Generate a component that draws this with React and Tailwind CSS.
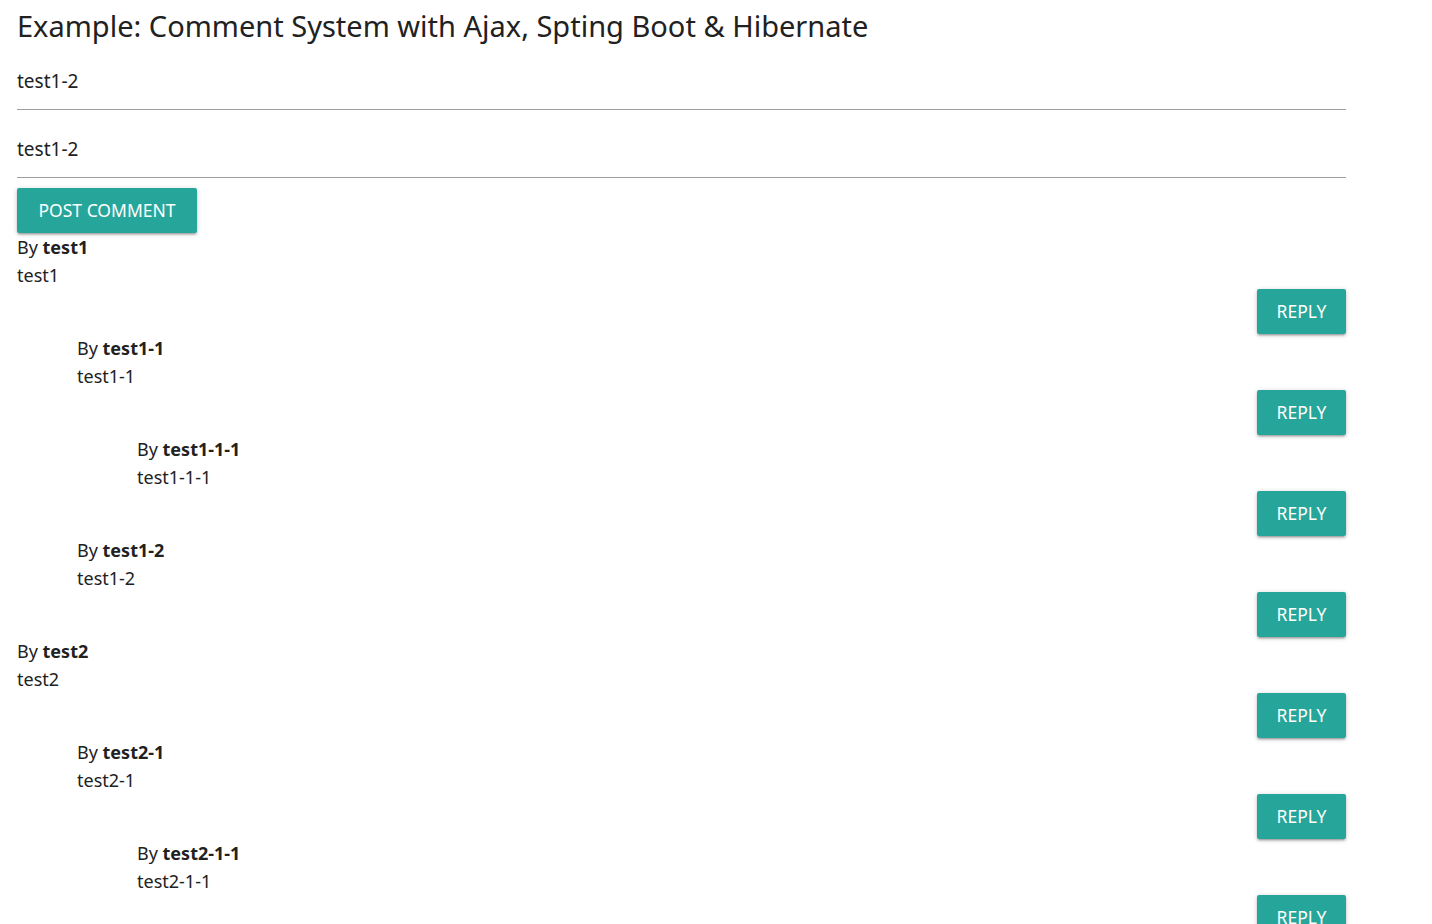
import React from "react";

const comments = [
  { author: "test1", text: "test1", level: 0 },
  { author: "test1-1", text: "test1-1", level: 1 },
  { author: "test1-1-1", text: "test1-1-1", level: 2 },
  { author: "test1-2", text: "test1-2", level: 1 },
  { author: "test2", text: "test2", level: 0 },
  { author: "test2-1", text: "test2-1", level: 1 },
  { author: "test2-1-1", text: "test2-1-1", level: 2 },
];

const indent = ["pl-0", "pl-[60px]", "pl-[120px]"];

const btn =
  "h-[45px] rounded-[2px] bg-[#26a69a] text-white uppercase text-[17.5px] shadow-[0_2px_2px_0_rgba(0,0,0,0.14),0_3px_1px_-2px_rgba(0,0,0,0.12),0_1px_5px_0_rgba(0,0,0,0.2)]";

const Comment = ({ c }) => (
  <div className={indent[c.level]}>
    <div className="leading-[28px]">
      By <b className="font-bold">{c.author}</b>
    </div>
    <div className="leading-[28px]">{c.text}</div>
    <div className="flex justify-end">
      <button className={`${btn} w-[89px]`}>Reply</button>
    </div>
  </div>
);

export default function App() {
  return (
    <div
      className="min-h-screen bg-white text-[#212121] text-[18px] pl-[17px] overflow-hidden"
      style={{ fontFamily: '"Noto Sans", sans-serif' }}
    >
      <div className="w-[1329px]">
        <h1 className="text-[29px] leading-[52px] font-normal">
          Example: Comment System with Ajax, Spting Boot &amp; Hibernate
        </h1>
        <div className="mt-[12px] h-[46px] pb-[10px] text-[19px] border-b border-[#9e9e9e] flex items-center">
          test1-2
        </div>
        <div className="mt-[22px] h-[46px] pb-[10px] text-[19px] border-b border-[#9e9e9e] flex items-center">
          test1-2
        </div>
        <button className={`${btn} mt-[10px] w-[180px]`}>Post Comment</button>
        {comments.map((c) => (
          <Comment key={c.author} c={c} />
        ))}
      </div>
    </div>
  );
}
